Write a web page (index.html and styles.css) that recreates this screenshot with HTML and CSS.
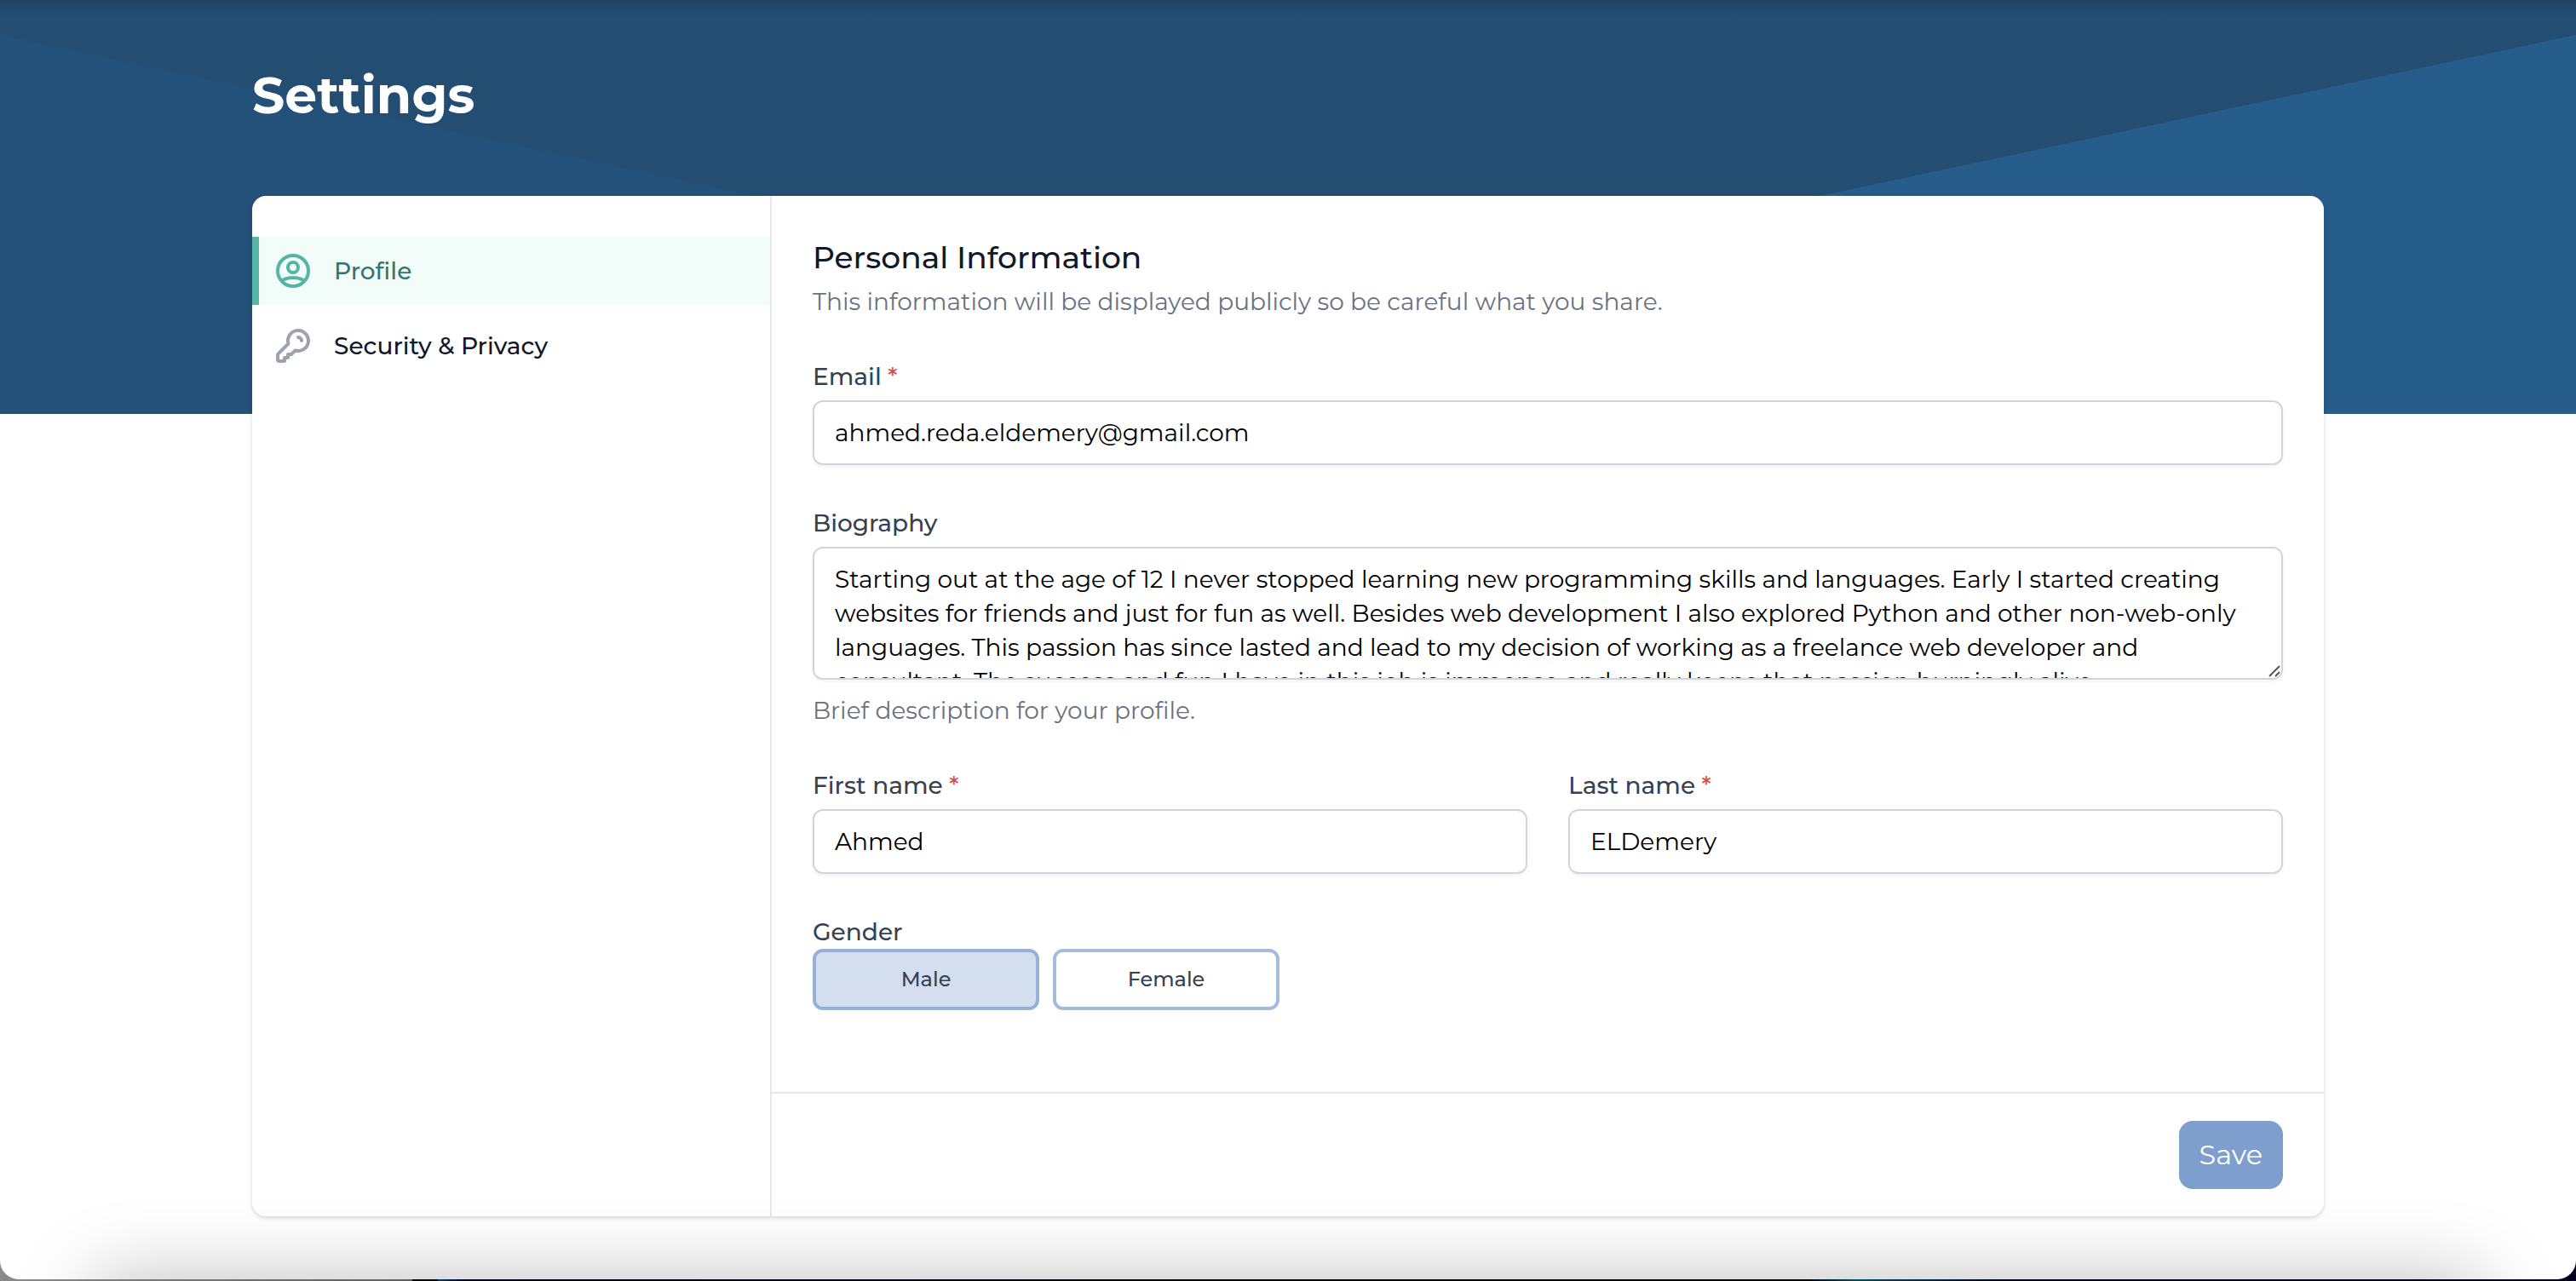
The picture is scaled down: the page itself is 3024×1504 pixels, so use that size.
FILE: index.html
```html
<!DOCTYPE html>
<html lang="en">
<head>
<meta charset="utf-8">
<meta name="viewport" content="width=device-width, initial-scale=1">
<title>Settings</title>
<link rel="stylesheet" href="styles.css">
</head>
<body>
<div class="window">
  <svg class="hero" viewBox="0 0 3024 486" preserveAspectRatio="none" aria-hidden="true">
    <rect class="hero-top" width="3024" height="486"/>
    <polygon class="hero-left" points="0,41 1512,363 1512,486 0,486"/>
    <polygon class="hero-right" points="3024,41 1512,363 1512,486 3024,486"/>
  </svg>
  <div class="container">
    <header class="page-header"><h1>Settings</h1></header>
    <main class="card">
      <nav class="sidebar" aria-label="Settings">
        <a class="nav-item nav-item-active" href="#profile" aria-current="page">
          <svg class="nav-icon" viewBox="0 0 24 24" aria-hidden="true"><path d="M5.121 17.804A13.937 13.937 0 0112 16c2.5 0 4.847.655 6.879 1.804M15 10a3 3 0 11-6 0 3 3 0 016 0zm6 2a9 9 0 11-18 0 9 9 0 0118 0z"/></svg>
          Profile
        </a>
        <a class="nav-item" href="#security">
          <svg class="nav-icon" viewBox="0 0 24 24" aria-hidden="true"><path d="M15 7a2 2 0 012 2m4 0a6 6 0 01-7.743 5.743L11 17H9v2H7v2H4a1 1 0 01-1-1v-2.586a1 1 0 01.293-.707l5.964-5.964A6 6 0 1121 9z"/></svg>
          Security &amp; Privacy
        </a>
      </nav>
      <form class="panel">
        <div class="fields">
          <div class="intro">
            <h2>Personal Information</h2>
            <p class="hint">This information will be displayed publicly so be careful what you share.</p>
          </div>
          <div class="field">
            <label for="email">Email <span class="required">*</span></label>
            <input class="control" id="email" type="email" value="ahmed.reda.eldemery@gmail.com">
          </div>
          <div class="bio">
            <div class="field">
              <label for="bio">Biography</label>
              <div class="textarea-wrap">
                <textarea class="control" id="bio" rows="3">Starting out at the age of 12 I never stopped learning new programming skills and languages. Early I started creating websites for friends and just for fun as well. Besides web development I also explored Python and other non-web-only languages. This passion has since lasted and lead to my decision of working as a freelance web developer and consultant. The success and fun I have in this job is immense and really keeps that passion burningly alive.</textarea>
                <svg class="grip" viewBox="0 0 16 16" aria-hidden="true"><path d="M2 14L14 2M9 14L14 9"/></svg>
              </div>
            </div>
            <p class="hint">Brief description for your profile.</p>
          </div>
          <div class="names">
            <div class="field">
              <label for="first">First name <span class="required">*</span></label>
              <input class="control" id="first" type="text" value="Ahmed">
            </div>
            <div class="field">
              <label for="last">Last name <span class="required">*</span></label>
              <input class="control" id="last" type="text" value="ELDemery">
            </div>
          </div>
          <fieldset class="gender">
            <legend>Gender</legend>
            <div class="options">
              <label class="option"><input type="radio" name="gender" checked>Male</label>
              <label class="option"><input type="radio" name="gender">Female</label>
            </div>
          </fieldset>
        </div>
        <div class="actions"><button class="save" type="button">Save</button></div>
      </form>
    </main>
  </div>
</div>
</body>
</html>
```

FILE: styles.css
```css
*, *::before, *::after { box-sizing: border-box; }
body {
  margin: 0;
  min-height: 100vh;
  padding-bottom: 2px;
  background: linear-gradient(90deg, #8a8a8a, #5f5f5f 16%, #000 16%, #000 17%, #0a3a70 17%, #00001e 18%, #000 50%, #000 70%, #0a4a5c 72%, #00001e 78%);
  font-family: "Montserrat", "Inter", sans-serif;
  font-size: 28px;
  line-height: 40px;
  color: #111827;
}
h1, h2, p { margin: 0; }
.window {
  position: relative;
  min-height: calc(100vh - 2px);
  padding-bottom: 74px;
  overflow: hidden;
  border-radius: 0 0 22px 22px;
  background: #fff;
}
/* shade cast along the top edge */
.window::before {
  content: "";
  position: absolute;
  inset: 0 0 auto;
  z-index: 1;
  height: 20px;
  background: linear-gradient(rgba(34, 60, 90, 0.6), rgba(34, 70, 100, 0));
}
/* soft shade rising from the bottom edge */
.window::after {
  content: "";
  position: absolute;
  inset: 100% 110px auto;
  height: 200px;
  box-shadow: 0 0 90px rgba(0, 0, 0, 0.26);
  pointer-events: none;
}
.hero {
  position: absolute;
  inset: 0 0 auto;
  width: 100%;
  height: 486px;
}
.hero-top { fill: #234e72; }
.hero-left { fill: #245179; }
.hero-right { fill: #275d8a; }
.container {
  position: relative;
  max-width: 2560px;
  margin: 0 auto;
  padding: 0 64px;
}
.page-header { padding: 76px 0 82px; }
h1 {
  font-size: 60px;
  font-weight: 700;
  line-height: 72px;
  color: #fff;
}
.card {
  display: grid;
  grid-template-columns: 1fr 3fr;
  overflow: hidden;
  border-radius: 16px;
  background: #fff;
  box-shadow: 0 2px 6px rgba(0, 0, 0, 0.1), 0 2px 4px rgba(0, 0, 0, 0.06);
}
.sidebar {
  display: flex;
  flex-direction: column;
  gap: 8px;
  padding: 48px 0;
}
.nav-item {
  display: flex;
  align-items: center;
  gap: 24px;
  padding: 16px 24px 16px 16px;
  border-left: 8px solid transparent;
  font-weight: 500;
  line-height: 48px;
  color: #111827;
  text-decoration: none;
}
.nav-item-active {
  border-color: #56b5a6;
  background: #f2fcf9;
  color: #34766d;
}
.nav-icon {
  width: 48px;
  height: 48px;
  fill: none;
  stroke: #9ca3af;
  stroke-width: 2;
  stroke-linecap: round;
  stroke-linejoin: round;
}
.nav-item-active .nav-icon { stroke: #56b5a6; }
.panel { min-width: 0; border-left: 2px solid #e5e7eb; }
.fields {
  display: flex;
  flex-direction: column;
  gap: 48px;
  padding: 48px 48px 96px;
}
.intro { display: grid; gap: 8px; }
h2 {
  font-size: 36px;
  font-weight: 500;
  line-height: 48px;
}
.hint { color: #6b7280; }
.field { display: grid; gap: 8px; font-weight: 500; color: #374151; }
.required { color: #dc4b45; }
.control {
  display: block;
  width: 100%;
  padding: 16px 24px;
  border: 2px solid #d1d5db;
  border-radius: 12px;
  background: #fff;
  box-shadow: 0 2px 4px rgba(0, 0, 0, 0.05);
  font: inherit;
  font-weight: 400;
  color: #000;
}
input.control { height: 76px; }
textarea.control { resize: vertical; scrollbar-width: none; }
textarea.control::-webkit-resizer { background: transparent; }
.textarea-wrap { position: relative; }
.grip {
  position: absolute;
  right: 2px;
  bottom: 2px;
  width: 16px;
  height: 16px;
  fill: none;
  stroke: #555;
  stroke-width: 2;
  pointer-events: none;
}
.bio { display: grid; gap: 16px; }
.names { display: grid; grid-template-columns: 1fr 1fr; gap: 48px; }
.gender { margin: 0; padding: 0; border: 0; }
legend { padding: 0; font-weight: 500; color: #374151; }
.options { display: flex; gap: 16px; }
.option {
  display: flex;
  align-items: center;
  justify-content: center;
  width: 266px;
  height: 72px;
  border: 4px solid #a3bbdc;
  border-radius: 12px;
  font-size: 24px;
  font-weight: 500;
  color: #374151;
}
.option input { position: absolute; opacity: 0; }
.option:has(:checked) { border-color: #96b1d9; background: #d3dfef; }
.actions {
  display: flex;
  justify-content: flex-end;
  padding: 32px 48px;
  border-top: 2px solid #e5e7eb;
}
.save {
  padding: 16px 24px;
  border: 0;
  border-radius: 16px;
  background: #7e9ecd;
  font: inherit;
  font-size: 32px;
  line-height: 48px;
  color: #fff;
}
```
